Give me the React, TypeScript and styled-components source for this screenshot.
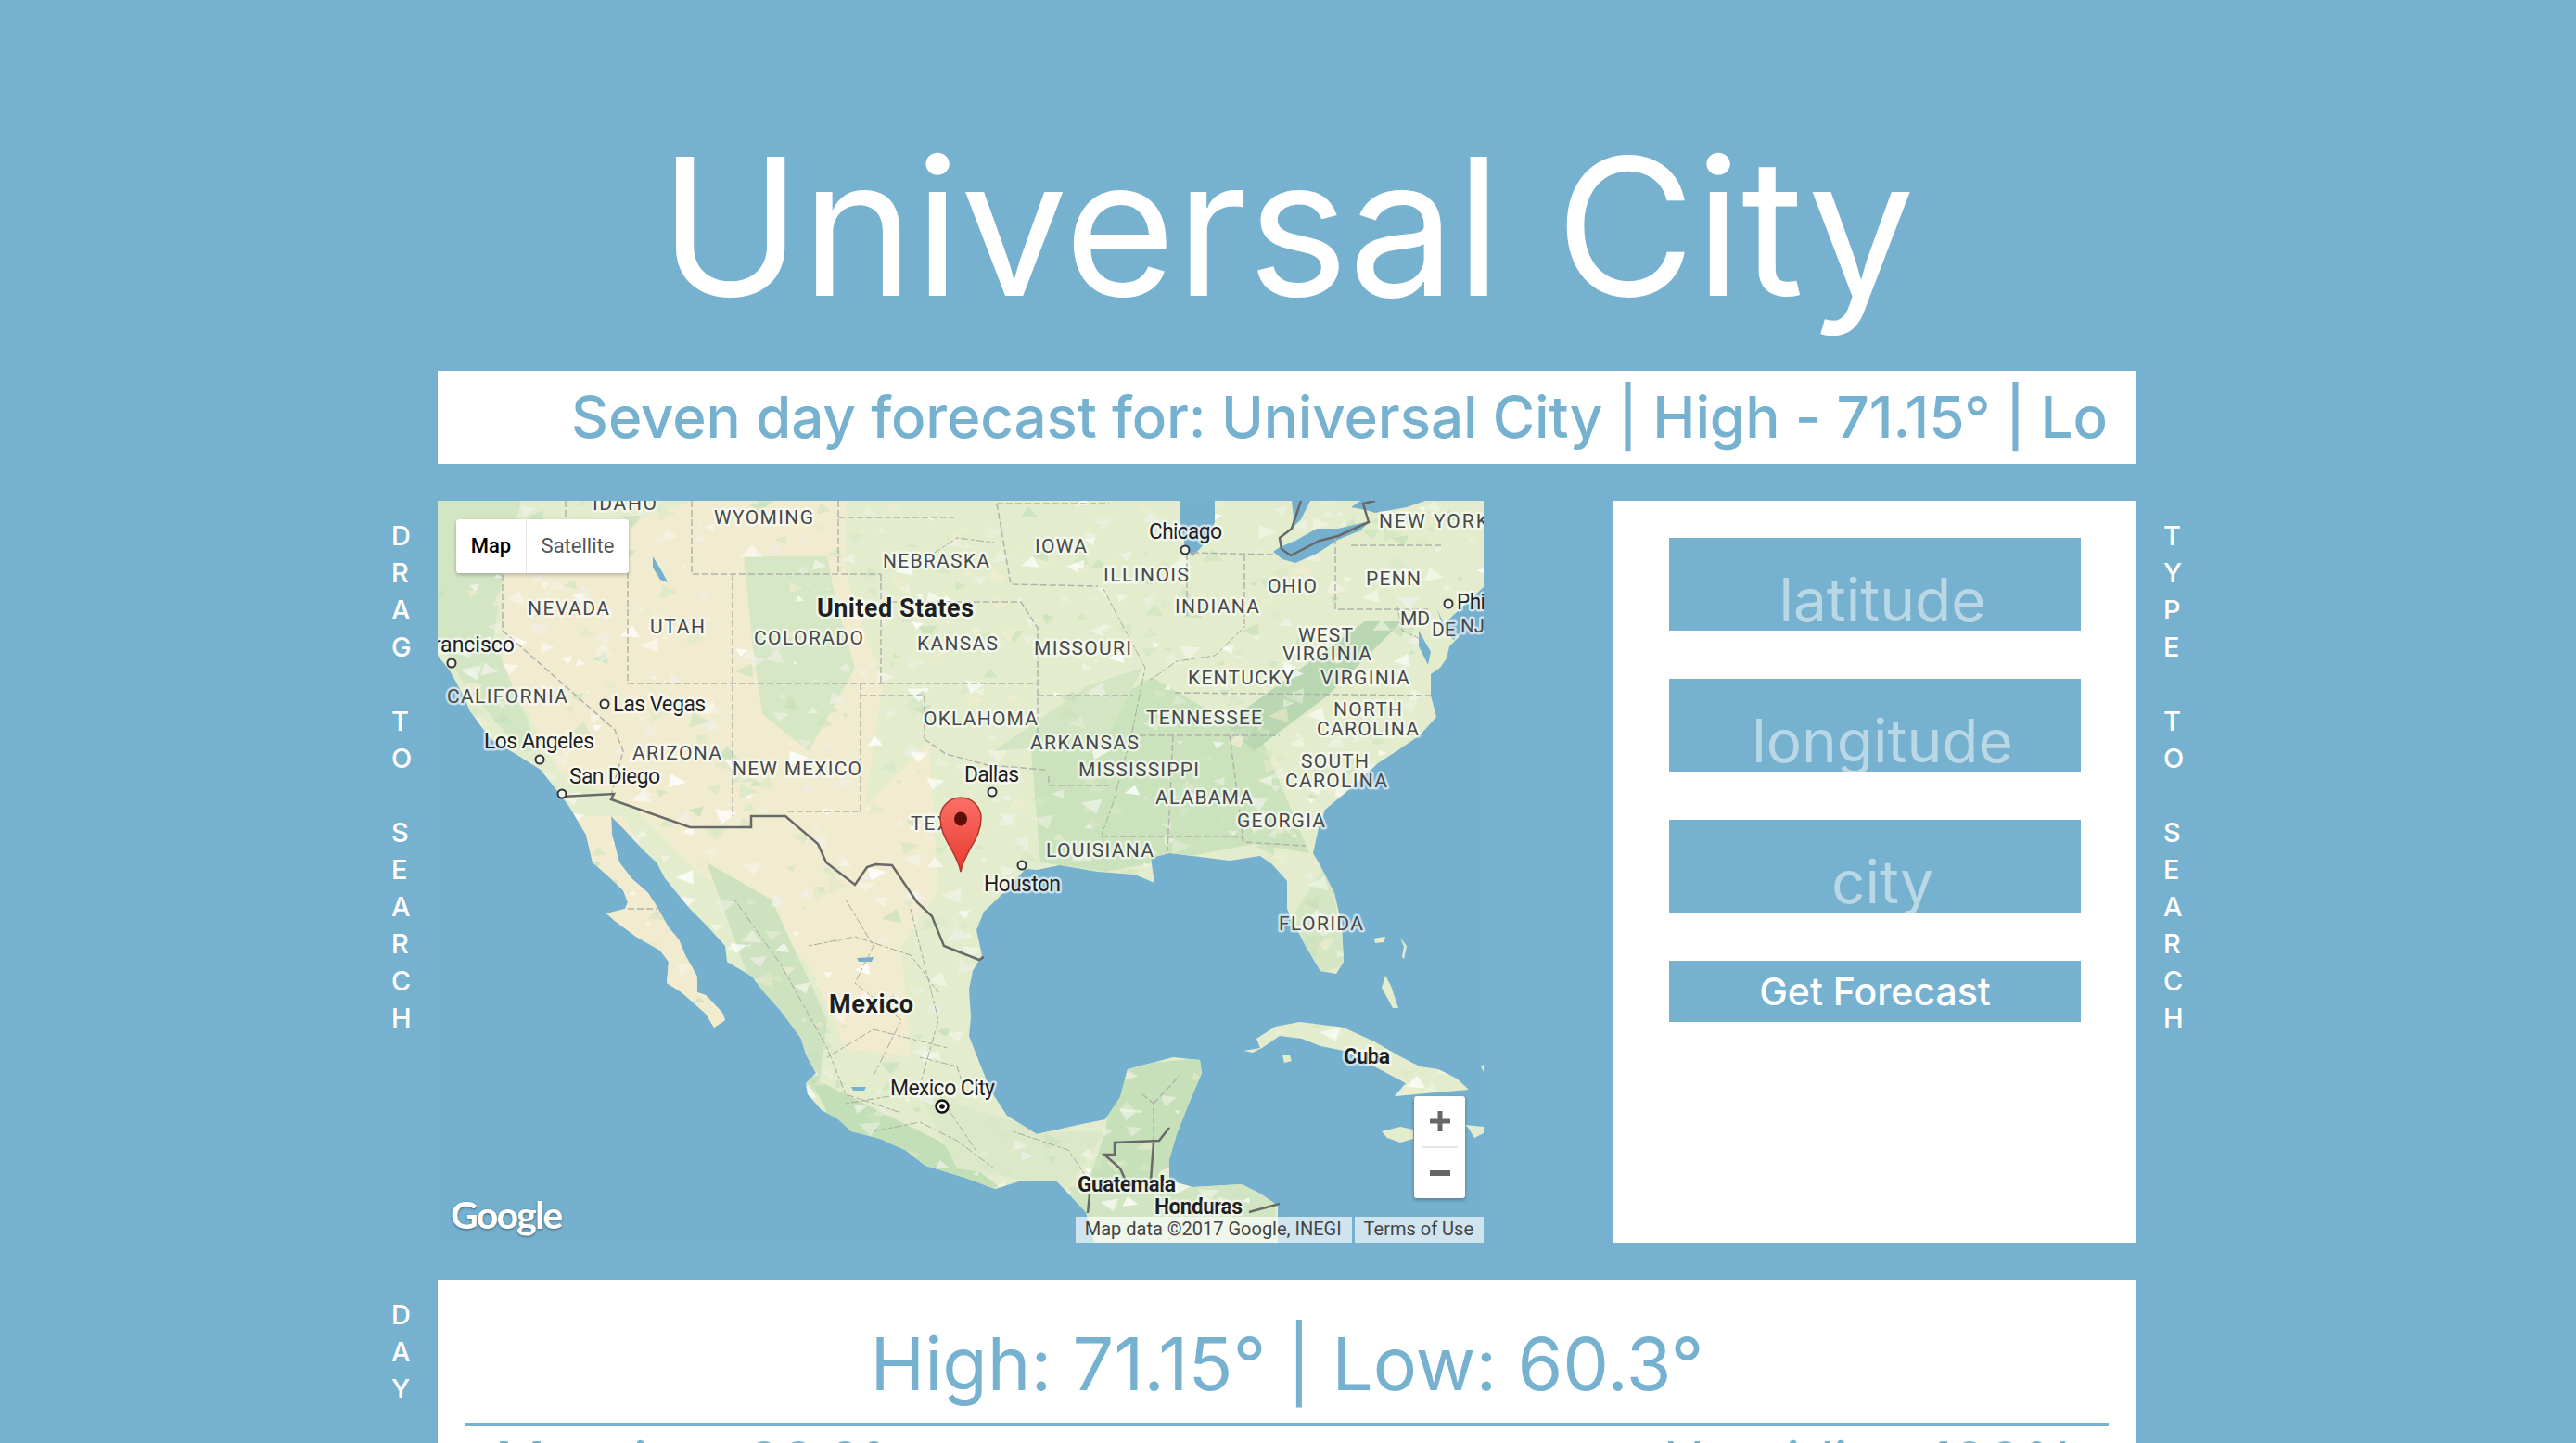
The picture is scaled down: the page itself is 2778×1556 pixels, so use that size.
import React, { useMemo } from 'react'
import styled, { createGlobalStyle } from 'styled-components'

const BLUE = '#76b2cf'
const FONT = '"Inter", "Noto Sans", sans-serif'

const GlobalStyle = createGlobalStyle`
  html, body {
    margin: 0;
    height: 100%;
    overflow: hidden;
    background: ${BLUE};
  }
  * { box-sizing: border-box; }
`

const Page = styled.main`
  min-height: 1556px;
  padding-left: 422px;
  background: ${BLUE};
  font-family: ${FONT};
  color: white;
`

const Title = styled.h1`
  width: 1932px;
  height: 400px;
  margin: 0;
  padding-top: 119px;
  text-align: center;
  font-size: 206px;
  font-weight: 400;
  line-height: 250px;
  letter-spacing: 0;
  white-space: nowrap;
`

const Row = styled.section`
  display: grid;
  grid-template-columns: 50px 1832px 1fr;
  margin-bottom: 40px;
`

const Panel = styled.div`
  background: white;
  color: ${BLUE};
`

const ForecastBar = styled(Panel)`
  height: 100px;
  padding: 0 30px;
  grid-column: 2;
`

const Marquee = styled.div`
  height: 100%;
  overflow: hidden;
  padding-left: 114px;
  font-size: 62px;
  font-weight: 500;
  line-height: 100px;
  letter-spacing: -0.15px;
  white-space: nowrap;
`

const Rail = styled.aside<{ $side: 'left' | 'right' }>`
  padding-top: 18px;
  padding-left: ${(p) => (p.$side === 'right' ? '29px' : '0')};
  font-size: 29px;
  font-weight: 500;
`

const RailLetter = styled.div`
  height: 40px;
  line-height: 40px;
`

const MainGrid = styled.div`
  display: grid;
  grid-template-columns: 1128px 564px;
  justify-content: space-between;
  height: 800px;
`

const MapFrame = styled.div`
  position: relative;
  width: 1128px;
  height: 800px;
  overflow: hidden;
  background: #75b1cf;
`

const MapSvg = styled.svg`
  display: block;
  font-family: Roboto, "Liberation Sans", sans-serif;
`

const LABEL_SIZES = { state: '21px', city: '23px', minor: '23px', country: '27px' }

type LabelKind = keyof typeof LABEL_SIZES

const PlaceLabel = styled.text<{ $kind: LabelKind }>`
  font-size: ${(p) => LABEL_SIZES[p.$kind]};
  font-weight: ${(p) => (p.$kind === 'country' || p.$kind === 'minor' ? 700 : 400)};
  fill: ${(p) => (p.$kind === 'state' ? '#47494a' : '#1f1f1f')};
  stroke: rgba(255, 255, 255, 0.62);
  stroke-width: 5px;
  stroke-linejoin: round;
  paint-order: stroke;
`

const TypeControl = styled.div`
  position: absolute;
  top: 20px;
  left: 20px;
  display: flex;
  height: 58px;
  background: white;
  border-radius: 3px;
  box-shadow: 0 2px 4px rgba(0, 0, 0, 0.25);
  font-family: Roboto, "Liberation Sans", sans-serif;
  font-size: 22px;
`

const TypeButton = styled.div<{ $active?: boolean }>`
  display: flex;
  align-items: center;
  justify-content: center;
  width: ${(p) => (p.$active ? '76px' : '110px')};
  padding-bottom: 2px;
  color: ${(p) => (p.$active ? '#000' : '#565656')};
  font-weight: ${(p) => (p.$active ? 500 : 400)};
  border-right: ${(p) => (p.$active ? '1px solid #e6e6e6' : 'none')};
`

const ZoomControl = styled.div`
  position: absolute;
  right: 20px;
  bottom: 48px;
  display: flex;
  flex-direction: column;
  width: 55px;
  height: 110px;
  background: white;
  border-radius: 3px;
  box-shadow: 0 2px 4px rgba(0, 0, 0, 0.3);
`

const ZoomButton = styled.div`
  flex: 1;
  display: flex;
  align-items: center;
  justify-content: center;
`

const ZoomDivider = styled.div`
  height: 2px;
  margin: 0 8px;
  background: #e6e6e6;
`

const GoogleMark = styled.div`
  position: absolute;
  left: 14px;
  bottom: 6px;
  font-family: Lato, sans-serif;
  font-size: 41px;
  font-weight: 700;
  line-height: 48px;
  letter-spacing: -1.8px;
  color: white;
  text-shadow: 0 1px 3px rgba(0, 0, 0, 0.45);
`

const Attribution = styled.div`
  position: absolute;
  right: 0;
  bottom: 0;
  display: flex;
  gap: 3px;
  height: 28px;
  font-family: Roboto, "Liberation Sans", sans-serif;
  font-size: 20px;
  line-height: 27px;
  color: #444;
`

const AttributionItem = styled.span`
  padding: 0 11px 0 10px;
  background: rgba(255, 255, 255, 0.65);
  white-space: nowrap;
`

const SearchPanel = styled(Panel)`
  padding: 40px 60px 0;
`

const SearchInput = styled.input`
  display: block;
  width: 100%;
  height: 100px;
  margin: 0 0 52px;
  padding: 33px 0 0 16px;
  border: 0;
  outline: 0;
  background: ${BLUE};
  color: white;
  font-family: ${FONT};
  font-size: 64px;
  font-weight: 400;
  line-height: 76px;
  text-align: center;

  &::placeholder {
    color: #b9d7e5;
    opacity: 1;
  }
`

const SubmitButton = styled.button`
  display: block;
  width: 100%;
  height: 66px;
  padding: 0;
  border: 0;
  background: ${BLUE};
  color: white;
  font-family: ${FONT};
  font-size: 41px;
  font-weight: 500;
`

const DayPanel = styled(Panel)`
  height: 400px;
  padding: 0 30px;
`

const DayHeading = styled.h2`
  height: 158px;
  margin: 0;
  border-bottom: 4px solid ${BLUE};
  padding-top: 42px;
  text-align: center;
  font-size: 79px;
  font-weight: 400;
  line-height: 96px;
`

const Readings = styled.div`
  display: flex;
  justify-content: space-between;
  padding: 0 34px 0 32px;
  font-size: 60px;
  font-weight: 400;
  line-height: 76px;
`

type Place = [string, number, number, number, LabelKind]

const PLACES: Place[] = [
  ['IDAHO', 167, 10, 69, 'state'],
  ['WYOMING', 298, 25, 107, 'state'],
  ['NEBRASKA', 480, 72, 115, 'state'],
  ['NEVADA', 97, 123, 88, 'state'],
  ['UTAH', 229, 143, 59, 'state'],
  ['COLORADO', 341, 155, 118, 'state'],
  ['KANSAS', 517, 161, 87, 'state'],
  ['CALIFORNIA', 10, 218, 130, 'state'],
  ['OKLAHOMA', 524, 242, 123, 'state'],
  ['ARIZONA', 210, 279, 96, 'state'],
  ['NEW MEXICO', 318, 296, 139, 'state'],
  ['TEXAS', 510, 355, 72, 'state'],
  ['NEW YORK', 1015, 29, 118, 'state'],
  ['IOWA', 644, 56, 56, 'state'],
  ['ILLINOIS', 718, 87, 92, 'state'],
  ['OHIO', 895, 99, 53, 'state'],
  ['PENN', 1001, 91, 59, 'state'],
  ['INDIANA', 795, 121, 91, 'state'],
  ['MD', 1038, 134, 32, 'state'],
  ['DE', 1072, 146, 26, 'state'],
  ['NJ', 1103, 142, 26, 'state'],
  ['WEST', 928, 152, 59, 'state'],
  ['VIRGINIA', 911, 172, 96, 'state'],
  ['MISSOURI', 643, 166, 105, 'state'],
  ['MISSISSIPPI', 691, 297, 130, 'state'],
  ['KENTUCKY', 809, 198, 114, 'state'],
  ['VIRGINIA', 952, 198, 96, 'state'],
  ['NORTH', 966, 232, 74, 'state'],
  ['CAROLINA', 948, 253, 110, 'state'],
  ['TENNESSEE', 764, 241, 125, 'state'],
  ['ARKANSAS', 639, 268, 117, 'state'],
  ['SOUTH', 931, 288, 73, 'state'],
  ['CAROLINA', 914, 309, 110, 'state'],
  ['ALABAMA', 774, 327, 105, 'state'],
  ['GEORGIA', 862, 352, 95, 'state'],
  ['LOUISIANA', 656, 384, 116, 'state'],
  ['FLORIDA', 907, 463, 91, 'state'],
  ['Las Vegas', 189, 227, 100, 'city'],
  ['Los Angeles', 50, 267, 119, 'city'],
  ['San Diego', 142, 305, 98, 'city'],
  ['Dallas', 568, 303, 59, 'city'],
  ['Houston', 589, 421, 83, 'city'],
  ['Chicago', 767, 41, 79, 'city'],
  ['Philadelphia', 1099, 117, 116, 'city'],
  ['Mexico City', 488, 641, 113, 'city'],
  ['United States', 409, 125, 169, 'country'],
  ['Mexico', 422, 552, 91, 'country'],
  ['Cuba', 977, 607, 50, 'minor'],
  ['Guatemala', 690, 745, 106, 'minor'],
  ['Honduras', 773, 769, 95, 'minor'],
]

const CITY_DOTS = [
  [15, 175],
  [180, 219],
  [110, 279],
  [134, 316],
  [598, 314],
  [630, 393],
  [806, 53],
  [1090, 111],
]

const LAND =
  'M0 0 L1128 0 L1128 93 1118 110 1111 123 1101 147 1091 157 1088 170 1081 180 1071 187 1071 210 1077 233 1059 253 1034 270 1014 283 981 313 957 333 950 353 944 380 950 390 967 423 975 457 977 497 969 510 952 507 936 480 922 453 916 440 916 410 900 392 887 383 854 388 789 380 769 385 773 412 752 403 712 400 671 393 646 398 634 397 606 427 589 443 581 463 587 490 577 507 573 527 575 557 573 577 583 603 597 637 614 663 646 683 695 672 720 667 736 643 744 613 793 600 822 603 824 617 810 650 797 683 789 710 789 733 814 740 867 737 887 747 906 760 906 800 708 800 699 767 667 733 630 733 601 742 569 730 526 717 504 700 477 688 446 680 432 667 414 657 399 640 397 628 408 617 397 597 392 580 370 550 352 530 339 513 312 497 310 480 289 457 272 440 245 407 236 390 222 377 200 353 187 340 188 360 196 390 209 407 227 423 236 437 249 460 260 473 267 490 280 513 280 530 289 533 307 552 310 560 298 568 289 553 263 530 247 520 249 497 240 485 214 470 191 453 182 445 202 440 205 433 200 420 182 403 167 390 160 360 142 330 129 313 111 290 84 273 57 257 35 227 26 207 13 183 0 167 Z ' +
  'M869 593 887 590 883 580 903 567 930 562 977 568 1010 583 1034 597 1059 610 1079 613 1099 623 1112 635 1087 637 1032 642 1044 628 1010 610 977 593 952 588 932 580 908 577 889 590 879 595 Z ' +
  'M1018 680 1038 675 1052 678 1052 688 1038 692 1024 687 Z M1108 673 1128 675 1128 682 1118 687 1112 677 Z ' +
  'M1022 512 1028 523 1036 547 1030 547 1018 525 Z M911 598 919 598 921 604 913 606 Z M1010 472 1022 470 1020 476 1011 477 Z ' +
  'M1038 471 1045 480 1042 494 1040 492 1042 481 Z M1125 610 1128 608 1128 616 Z'

const LAKES = [
  '901,55 908,50 925,43 948,30 971,30 1005,22 995,32 971,42 948,57 925,67 911,63',
  '921,0 941,0 931,20 921,30 923,17',
  '985,7 995,0 1065,0 1045,7 1011,13 1001,10',
  '801,0 838,0 838,23 830,43 814,60 806,50 801,23',
  '232,60 243,78 248,88 240,85 232,72',
  '1058,140 1071,163 1068,177 1058,157',
  '1078,117 1085,133 1128,93 1128,110 1096,150 1086,143',
  '452,493 470,492 468,497 454,497',
  '446,632 462,632 460,636 448,636',
]

const ZONES: [string, string][] = [
  ['#f1ecd0', '70,60 280,0 440,0 440,80 480,200 460,330 530,260 540,420 500,480 510,600 440,590 400,500 340,440 280,400 210,330 130,290 70,180'],
  ['#f1ecd0', '150,340 200,340 320,560 290,580 170,460'],
  ['#d2e6c3', '0,0 90,0 70,80 60,150 110,270 90,270 30,200 0,150'],
  ['#d6e7c5', '330,60 420,60 430,110 450,180 400,270 350,230 340,160'],
  ['#cde3bf', '290,390 360,430 420,560 410,640 380,620 330,500'],
  ['#c3dfb8', '400,620 540,690 620,750 560,740 430,680'],
  ['#dbe9c8', '520,640 660,680 720,680 680,740 560,720'],
  ['#cbe3bd', '640,270 770,190 890,260 940,380 880,370 720,400 650,390'],
  ['#c6e1b9', '730,610 830,600 800,700 780,740 700,740 720,680'],
  ['#b9d8b2', '850,240 1000,130 1040,130 960,210 880,270'],
  ['#d3e5c2', '600,270 700,200 760,180 720,260'],
  ['#d2e5c2', '680,740 900,730 906,800 700,800'],
  ['#d5e6c4', '900,480 960,390 980,500 950,510'],
]

const STATE_LINES = [
  '432,0 432,78',
  '432,18 557,18',
  '274,0 274,79 478,79',
  '318,79 318,340',
  '478,79 478,197',
  '205,47 205,197',
  '205,197 647,197',
  '478,109 629,109 647,137 647,263',
  '456,197 456,335 374,335',
  '456,210 525,210 525,257',
  '525,257 548,273 593,285 655,290',
  '647,210 750,210',
  '70,80 70,140 191,247 200,270 187,317',
  '138,0 138,49',
  '603,3 724,3',
  '603,3 618,90 712,92',
  '757,253 908,253',
  '795,207 1071,210',
  '659,297 659,307 724,307',
  '793,253 787,378',
  '854,253 869,367',
  '716,362 867,362 869,368 936,372',
  '808,57 808,127',
  '870,58 870,133',
  '814,56 901,58',
  '968,40 968,117 1071,117',
  '985,48 1083,48',
  '205,440 236,440',
  '760,640 772,650 772,692',
  '772,650 800,620',
]

const RIVERS = [
  '718,95 740,137 763,180 748,253 728,327 716,360',
  '871,135 838,167 797,173 769,193',
  '1035,115 1040,140 1062,150',
  '530,60 560,40 600,45',
  '440,430 470,480 450,520 500,560 470,620',
  '510,440 540,560 520,630',
  '320,430 370,500 420,590 440,640 500,660',
  '400,480 450,470 510,490 540,530',
  '420,600 470,570 550,590',
  '440,650 500,640 540,640 580,700',
  '470,680 520,670 560,690 600,720',
  '520,600 560,610 570,640',
  '620,680 680,700 700,730',
]

const BORDERS = [
  '134,319 190,316 187,322 272,352 338,352 338,340 375,340 410,370 419,390 450,414 463,395 472,392 490,393 517,433 533,448 546,480 566,488 584,495 589,492',
  '931,0 921,30 908,40 910,52 920,59 951,43 971,38 1004,23 998,3 1011,0',
  '789,676 778,690 730,692 730,705 719,705 736,720 742,733',
  '772,692 769,733',
  '875,767 908,758',
  '703,748 701,768',
]

const SPECKLE_COLORS = ['#ffffff', '#f5f4ea', '#c7e0bb', '#d6e7c5', '#f1ecd0', '#f0f0ea']

function buildSpeckles() {
  let seed = 4711
  const next = () => {
    seed = (seed * 16807) % 2147483647
    return seed / 2147483647
  }
  return Array.from({ length: 1500 }, () => {
    const x = next() * 1128
    const y = next() * 800
    const s = 3 + next() * 11
    const a = next() * 6.28
    const points = [0, 2.1, 4.2]
      .map((o) => `${x + Math.cos(a + o) * s},${y + Math.sin(a + o) * s * 0.7}`)
      .join(' ')
    return { points, fill: SPECKLE_COLORS[Math.floor(next() * SPECKLE_COLORS.length)], opacity: 0.35 + next() * 0.45 }
  })
}

const railLetters = (text: string) =>
  text.split('').map((c, i) => <RailLetter key={i}>{c === ' ' ? '\u00a0' : c}</RailLetter>)

const MapDrawing: React.FC = () => {
  const speckles = useMemo(buildSpeckles, [])
  return (
    <MapSvg width="1128" height="800" viewBox="0 0 1128 800">
      <defs>
        <clipPath id="land-clip">
          <path d={LAND} />
        </clipPath>
        <linearGradient id="pin-fill" x1="0" y1="0" x2="0" y2="1">
          <stop offset="0" stopColor="#fb7066" />
          <stop offset="1" stopColor="#e8392e" />
        </linearGradient>
      </defs>
      <path d={LAND} fill="#e3edcd" />
      <g clipPath="url(#land-clip)">
        {ZONES.map(([fill, points], i) => (
          <polygon key={i} points={points} fill={fill} />
        ))}
        {speckles.map((s, i) => (
          <polygon key={i} points={s.points} fill={s.fill} opacity={s.opacity} />
        ))}
      </g>
      {LAKES.map((points, i) => (
        <polygon key={i} points={points} fill="#75b1cf" />
      ))}
      <g fill="none">
        {RIVERS.map((points, i) => (
          <polyline key={i} points={points} stroke="#a9a9a0" strokeWidth="1" strokeDasharray="4 2 8 3" />
        ))}
        {STATE_LINES.map((points, i) => (
          <polyline key={i} points={points} stroke="#b2b2ac" strokeWidth="1.5" strokeDasharray="7 3" />
        ))}
        {BORDERS.map((points, i) => (
          <polyline key={i} points={points} stroke="#69696a" strokeWidth="2.5" />
        ))}
      </g>
      <PlaceLabel $kind="city" x="83" y="163" textAnchor="end">
        San Francisco
      </PlaceLabel>
      {PLACES.map(([label, x, y, width, kind], i) => (
        <PlaceLabel key={i} $kind={kind} x={x} y={y} textLength={width} lengthAdjust="spacing">
          {label}
        </PlaceLabel>
      ))}
      {CITY_DOTS.map(([x, y], i) => (
        <circle key={i} cx={x} cy={y} r="4.5" fill="#f4f4ee" stroke="#333" strokeWidth="2" />
      ))}
      <circle cx="544" cy="653" r="6.5" fill="#fff" stroke="#111" strokeWidth="2.5" />
      <circle cx="544" cy="653" r="2.8" fill="#111" />
      <path
        d="M564 400 C560 378 542 365 542 342 A22 22 0 1 1 586 342 C586 365 568 378 564 400 Z"
        fill="url(#pin-fill)"
        stroke="#b3352d"
        strokeWidth="1.5"
      />
      <ellipse cx="564" cy="343" rx="7" ry="7.5" fill="#5f0f0a" />
    </MapSvg>
  )
}

export default function App() {
  return (
    <Page>
      <GlobalStyle />
      <Title>Universal City</Title>

      <Row>
        <ForecastBar>
          <Marquee>Seven day forecast for: Universal City | High - 71.15° | Low - 60.3°</Marquee>
        </ForecastBar>
      </Row>

      <Row>
        <Rail $side="left">{railLetters('DRAG TO SEARCH')}</Rail>
        <MainGrid>
          <MapFrame>
            <MapDrawing />
            <TypeControl>
              <TypeButton $active>Map</TypeButton>
              <TypeButton>Satellite</TypeButton>
            </TypeControl>
            <ZoomControl>
              <ZoomButton>
                <svg width="22" height="22" viewBox="0 0 22 22">
                  <path d="M8.5 0h5v8.5H22v5h-8.5V22h-5v-8.5H0v-5h8.5z" fill="#666" />
                </svg>
              </ZoomButton>
              <ZoomDivider />
              <ZoomButton>
                <svg width="22" height="6" viewBox="0 0 22 6">
                  <rect width="22" height="6" fill="#666" />
                </svg>
              </ZoomButton>
            </ZoomControl>
            <GoogleMark>Google</GoogleMark>
            <Attribution>
              <AttributionItem>Map data ©2017 Google, INEGI</AttributionItem>
              <AttributionItem>Terms of Use</AttributionItem>
            </Attribution>
          </MapFrame>
          <SearchPanel>
            <SearchInput placeholder="latitude" />
            <SearchInput placeholder="longitude" />
            <SearchInput placeholder="city" />
            <SubmitButton>Get Forecast</SubmitButton>
          </SearchPanel>
        </MainGrid>
        <Rail $side="right">{railLetters('TYPE TO SEARCH')}</Rail>
      </Row>

      <Row>
        <Rail $side="left">{railLetters('DAY')}</Rail>
        <DayPanel>
          <DayHeading>High: 71.15° | Low: 60.3°</DayHeading>
          <Readings>
            <span>Morning: 66.8°</span>
            <span>Humidity: 100%</span>
          </Readings>
        </DayPanel>
      </Row>
    </Page>
  )
}
